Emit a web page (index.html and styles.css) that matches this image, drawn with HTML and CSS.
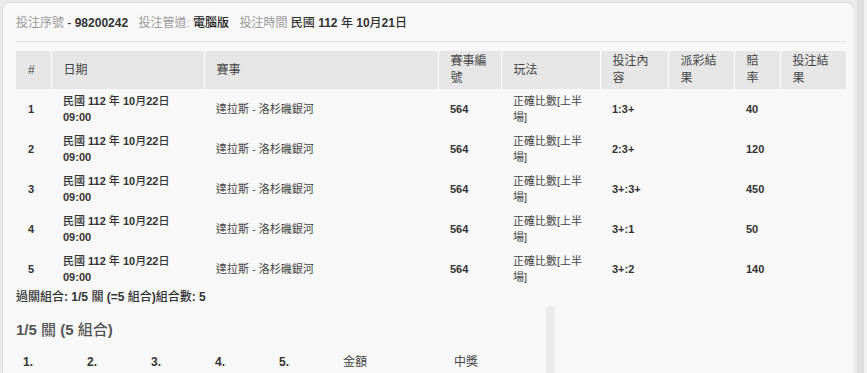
FILE: index.html
```html
<!DOCTYPE html>
<html lang="zh-Hant">
<head>
<meta charset="utf-8">
<title>投注明細</title>
<link rel="stylesheet" href="styles.css">
</head>
<body>
<div class="modal">
  <div class="info">
    <span class="lbl">投注序號</span> - <b>98200242</b>
    <span class="grp"><span class="lbl">投注管道:</span> <b class="cjb">電腦版</b></span>
    <span class="grp"><span class="lbl">投注時間</span> <b><span class="cj">民國</span> 112 <span class="cj">年</span> 10<span class="cj">月</span>21<span class="cj">日</span></b></span>
  </div>
  <hr class="sep">
  <table class="bets">
    <colgroup>
      <col style="width:35px"><col style="width:153px"><col style="width:234px"><col style="width:63px"><col style="width:99px"><col style="width:68px"><col style="width:66px"><col style="width:46px"><col style="width:66px">
    </colgroup>
    <thead>
      <tr><th>#</th><th>日期</th><th>賽事</th><th>賽事編號</th><th>玩法</th><th>投注內容</th><th>派彩結果</th><th>賠率</th><th>投注結果</th></tr>
    </thead>
    <tbody>
      <tr><td class="b">1</td><td class="b"><span class="cj">民國</span> 112 <span class="cj">年</span> 10<span class="cj">月</span>22<span class="cj">日</span> 09:00</td><td>達拉斯 - 洛杉磯銀河</td><td class="b">564</td><td>正確比數[上半場]</td><td class="b">1:3+</td><td></td><td class="b">40</td><td></td></tr>
      <tr><td class="b">2</td><td class="b"><span class="cj">民國</span> 112 <span class="cj">年</span> 10<span class="cj">月</span>22<span class="cj">日</span> 09:00</td><td>達拉斯 - 洛杉磯銀河</td><td class="b">564</td><td>正確比數[上半場]</td><td class="b">2:3+</td><td></td><td class="b">120</td><td></td></tr>
      <tr><td class="b">3</td><td class="b"><span class="cj">民國</span> 112 <span class="cj">年</span> 10<span class="cj">月</span>22<span class="cj">日</span> 09:00</td><td>達拉斯 - 洛杉磯銀河</td><td class="b">564</td><td>正確比數[上半場]</td><td class="b">3+:3+</td><td></td><td class="b">450</td><td></td></tr>
      <tr><td class="b">4</td><td class="b"><span class="cj">民國</span> 112 <span class="cj">年</span> 10<span class="cj">月</span>22<span class="cj">日</span> 09:00</td><td>達拉斯 - 洛杉磯銀河</td><td class="b">564</td><td>正確比數[上半場]</td><td class="b">3+:1</td><td></td><td class="b">50</td><td></td></tr>
      <tr><td class="b">5</td><td class="b"><span class="cj">民國</span> 112 <span class="cj">年</span> 10<span class="cj">月</span>22<span class="cj">日</span> 09:00</td><td>達拉斯 - 洛杉磯銀河</td><td class="b">564</td><td>正確比數[上半場]</td><td class="b">3+:2</td><td></td><td class="b">140</td><td></td></tr>
    </tbody>
  </table>
  <div class="parlay"><span class="cj">過關組合</span>: 1/5 <span class="cj">關</span> (=5 <span class="cj">組合</span>)<span class="cj">組合數</span>: 5</div>
  <div class="combo-wrap">
    <div class="combo">
      <h4 class="combo-title">1/5 <span class="cj">關</span> (5 <span class="cj">組合</span>)</h4>
      <table class="combo-table">
        <colgroup>
          <col style="width:64px"><col style="width:64px"><col style="width:64px"><col style="width:64px"><col style="width:64px"><col style="width:111px"><col style="width:99px">
        </colgroup>
        <thead>
          <tr><th class="b">1.</th><th class="b">2.</th><th class="b">3.</th><th class="b">4.</th><th class="b">5.</th><th>金額</th><th>中獎</th></tr>
        </thead>
      </table>
    </div>
    <div class="vbar"></div>
  </div>
</div>
<div class="rail"><div class="rail-shade"></div><div class="rail-strip"></div><div class="rail-edge"></div></div>
</body>
</html>
```
FILE: styles.css
```css
html, body {
  margin: 0;
  height: 100%;
}
body {
  display: flex;
  overflow: hidden;
  background: #ececec;
  font-family: "Liberation Sans", Arial, "Noto Sans CJK TC", sans-serif;
  color: #333;
}
.modal {
  flex: 1;
  margin: 3px 0 0 3px;
  background: #f8f8f8;
  border-radius: 6px 6px 0 0;
  box-shadow: 0 0 3px rgba(0, 0, 0, 0.18);
  padding: 12px 7px 0 13px;
  overflow: hidden;
}
.info {
  font-size: 12px;
  line-height: 17px;
  white-space: nowrap;
}
.info b { font-weight: 700; color: #333; }
.info b.cjb { font-weight: 500; color: #222; }
.lbl { color: #9a9a9a; }
.grp { margin-left: 7px; }
.cj { font-weight: 500; }
.sep {
  border: 0;
  border-top: 1px solid #e4e4e4;
  margin: 9px 0 9px;
  width: 830px;
}
.bets {
  width: 830px;
  table-layout: fixed;
  border-collapse: collapse;
}
.bets th {
  background: #e6e6e6;
  border-right: 1px solid #fff;
  font-weight: 400;
  font-size: 12px;
  line-height: 17px;
  color: #444;
  text-align: left;
  padding: 2px 12px;
  height: 34px;
  vertical-align: middle;
}
.bets th:last-child { border-right: 0; }
.bets td {
  font-size: 11px;
  line-height: 16px;
  padding: 4px 12px;
  height: 32px;
  vertical-align: middle;
  color: #444;
}
.b { font-weight: 700; }
.bets td.b { color: #333; }
.parlay {
  font-size: 12px;
  line-height: 17px;
  font-weight: 700;
  color: #333;
}
.combo-wrap {
  display: flex;
  align-items: stretch;
}
.combo {
  width: 530px;
}
.combo-title {
  margin: 14px 0 14px;
  font-size: 15px;
  line-height: 20px;
  font-weight: 700;
  color: #555;
}
.combo-table {
  border-collapse: collapse;
  table-layout: fixed;
}
.combo-table th {
  text-align: left;
  font-size: 12px;
  line-height: 17px;
  padding: 0 7px;
  color: #333;
}
.combo-table th:not(.b) { font-weight: 400; color: #444; }
.vbar {
  width: 9px;
  min-height: 80px;
  background: #ebebeb;
  border-radius: 4px 4px 0 0;
}
.rail {
  width: 14px;
  display: flex;
}
.rail-shade {
  width: 3px;
  background: #ececec;
}
.rail-strip {
  width: 8px;
  background: #dedede;
  border-left: 1px solid #e6e6e6;
  box-sizing: border-box;
}
.rail-edge {
  width: 3px;
  background: #f2f2f2;
}
```
